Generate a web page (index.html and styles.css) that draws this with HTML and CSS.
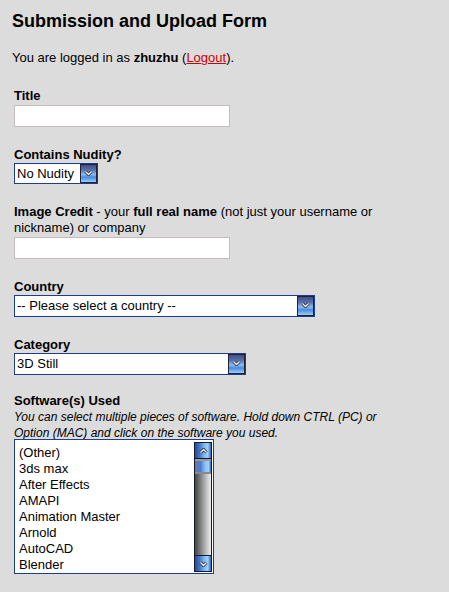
FILE: index.html
```html
<!DOCTYPE html>
<html>
<head>
<meta charset="utf-8">
<title>Submission and Upload Form</title>
<link rel="stylesheet" href="styles.css">
</head>
<body>
<h1 class="page-title">Submission and Upload Form</h1>
<p class="login">You are logged in as <b>zhuzhu</b> (<a href="#" class="logout">Logout</a>).</p>
<form class="form">
  <div class="field">
    <label class="label">Title</label>
    <input class="text-input" type="text">
  </div>
  <div class="field">
    <label class="label">Contains Nudity?</label>
    <div class="dropdown dd-nudity">
      <span class="dd-value">No Nudity</span>
      <span class="dd-btn"><svg width="9" height="6" viewBox="0 0 9 6"><polyline points="1.5,1.5 4.5,4.5 7.5,1.5" fill="none" stroke="#1a2040" stroke-width="3"/><polyline points="1.5,1.5 4.5,4.5 7.5,1.5" fill="none" stroke="#fff" stroke-width="1.3"/></svg></span>
    </div>
  </div>
  <div class="field">
    <label class="label-text"><b>Image Credit</b> - your <b>full real name</b> (not just your username or nickname) or company</label>
    <input class="text-input" type="text">
  </div>
  <div class="field">
    <label class="label">Country</label>
    <div class="dropdown dd-country">
      <span class="dd-value">-- Please select a country --</span>
      <span class="dd-btn"><svg width="9" height="6" viewBox="0 0 9 6"><polyline points="1.5,1.5 4.5,4.5 7.5,1.5" fill="none" stroke="#1a2040" stroke-width="3"/><polyline points="1.5,1.5 4.5,4.5 7.5,1.5" fill="none" stroke="#fff" stroke-width="1.3"/></svg></span>
    </div>
  </div>
  <div class="field">
    <label class="label">Category</label>
    <div class="dropdown dd-category">
      <span class="dd-value">3D Still</span>
      <span class="dd-btn"><svg width="9" height="6" viewBox="0 0 9 6"><polyline points="1.5,1.5 4.5,4.5 7.5,1.5" fill="none" stroke="#1a2040" stroke-width="3"/><polyline points="1.5,1.5 4.5,4.5 7.5,1.5" fill="none" stroke="#fff" stroke-width="1.3"/></svg></span>
    </div>
  </div>
  <div class="field field-software">
    <label class="label">Software(s) Used</label>
    <div class="hint">You can select multiple pieces of software. Hold down CTRL (PC) or Option (MAC) and click on the software you used.</div>
    <div class="listbox" role="listbox">
      <div class="list-items">
        <div class="item">(Other)</div>
        <div class="item">3ds max</div>
        <div class="item">After Effects</div>
        <div class="item">AMAPI</div>
        <div class="item">Animation Master</div>
        <div class="item">Arnold</div>
        <div class="item">AutoCAD</div>
        <div class="item">Blender</div>
      </div>
      <div class="scrollbar">
        <div class="sb-btn"><svg width="9" height="6" viewBox="0 0 9 6"><polyline points="1.5,4.5 4.5,1.5 7.5,4.5" fill="none" stroke="#1a2040" stroke-width="3"/><polyline points="1.5,4.5 4.5,1.5 7.5,4.5" fill="none" stroke="#fff" stroke-width="1.3"/></svg></div>
        <div class="sb-track">
          <div class="sb-thumb"></div>
        </div>
        <div class="sb-btn"><svg width="9" height="6" viewBox="0 0 9 6"><polyline points="1.5,1.5 4.5,4.5 7.5,1.5" fill="none" stroke="#1a2040" stroke-width="3"/><polyline points="1.5,1.5 4.5,4.5 7.5,1.5" fill="none" stroke="#fff" stroke-width="1.3"/></svg></div>
      </div>
    </div>
  </div>
</form>
</body>
</html>
```
FILE: styles.css
```css
html, body {
  background: #dcdcdc;
}
body {
  margin: 0;
  padding: 0 12px;
  font-family: "Liberation Sans", Arial, sans-serif;
  font-size: 13px;
  line-height: 16px;
  color: #000;
}
.page-title {
  margin: 10px 0 0;
  font-size: 18px;
  line-height: 22px;
  font-weight: bold;
}
.login {
  margin: 18px 0 0;
}
.logout {
  color: #cc0000;
  text-decoration: underline;
}
.form {
  margin: 22px 0 0 2px;
  width: 400px;
  display: flex;
  flex-direction: column;
  gap: 20px;
}
.field {
  display: flex;
  flex-direction: column;
  align-items: flex-start;
}
.field-software {
  margin-top: -2px;
}
.label {
  font-weight: bold;
  display: block;
}
.label-text {
  display: block;
}
.text-input {
  margin: 1px 0 0;
  box-sizing: border-box;
  width: 216px;
  height: 22px;
  border: 1px solid #c4bcbc;
  background: #fff;
  padding: 0 2px;
  font: inherit;
}
.dropdown {
  box-sizing: border-box;
  display: flex;
  height: 21px;
  border: 1px solid #1f3d8f;
  background: #fff;
}
.dd-nudity { width: 84px; }
.dd-country { width: 301px; height: 22px; }
.dd-category { width: 232px; height: 22px; }
.dd-value {
  flex: 1;
  padding-left: 2px;
  line-height: 19px;
  white-space: nowrap;
  overflow: hidden;
}
.dd-btn {
  box-sizing: border-box;
  width: 17px;
  display: flex;
  justify-content: center;
  padding-top: 5px;
  border: 1px solid #1e2234;
  background: linear-gradient(to bottom, #3f4f88 0%, #5a70ac 30%, #8cbcec 55%, #4a8ade 72%, #98d0fc 100%);
}
.hint {
  font-style: italic;
  font-size: 12px;
}
.listbox {
  box-sizing: border-box;
  width: 200px;
  height: 135px;
  margin-top: -2px;
  border: 1px solid #1f3d8f;
  background: #fff;
  display: flex;
  padding: 2px 1px 1px 4px;
}
.list-items {
  flex: 1;
  overflow: hidden;
  padding-top: 3px;
}
.item {
  height: 16px;
  line-height: 16px;
  white-space: nowrap;
}
.scrollbar {
  width: 18px;
  display: flex;
  flex-direction: column;
}
.sb-btn {
  box-sizing: border-box;
  height: 17px;
  border: 1px solid #141a2c;
  display: flex;
  align-items: center;
  justify-content: center;
  background: linear-gradient(to right, #2a4896 0%, #4478c8 30%, #84bcf0 60%, #a0d0fa 80%, #3660b0 100%);
}
.sb-track {
  flex: 1;
  border-left: 1px solid #141a2c;
  border-right: 1px solid #141a2c;
  background: linear-gradient(to right, #474747 0%, #6e6e6e 25%, #a4a4a4 55%, #cfcfcf 80%, #ececec 100%);
}
.sb-thumb {
  height: 15px;
  box-sizing: border-box;
  border-top: 2px solid #9a9a9a;
  border-bottom: 2px solid #8a8a8a;
  background: linear-gradient(to right, #6a7aa0 0%, #4a7ed0 35%, #8ec4f4 65%, #9ed2fc 85%, #3c64b4 100%);
}
```
